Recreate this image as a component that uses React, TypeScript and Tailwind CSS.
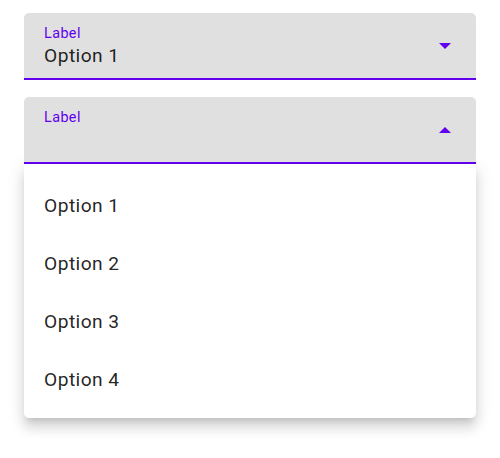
import React from "react";

function Arrow({ up }: { up?: boolean }) {
  return (
    <svg width="12" height="6" viewBox="0 0 12 6" className="shrink-0">
      {up ? <path d="M0 6 L6 0 L12 6 Z" fill="#6200ee" /> : <path d="M0 0 L12 0 L6 6 Z" fill="#6200ee" />}
    </svg>
  );
}

export default function App() {
  const options = ["Option 1", "Option 2", "Option 3", "Option 4"];
  return (
    <div className="w-[500px] h-[458px] bg-white px-6 pt-[13px] font-['Roboto',sans-serif]">
      <div className="h-[67px] bg-[#e0e0e0] rounded-t-[5px] border-b-[2.4px] border-[#6200ee] flex items-center pl-5 pr-[25px]">
        <div className="flex-1 flex flex-col pt-[2px]">
          <span className="text-[14.4px] leading-[16px] tracking-[0.4px] text-[#6200ee]">Label</span>
          <span className="text-[19.2px] leading-[24px] tracking-[0.45px] text-[rgba(0,0,0,0.87)] mt-[2px]">Option 1</span>
        </div>
        <Arrow />
      </div>
      <div className="mt-[17px]">
        <div className="h-[67px] bg-[#e0e0e0] rounded-t-[5px] border-b-[2.4px] border-[#6200ee] flex items-center pl-5 pr-[25px] relative">
          <div className="flex-1 self-start pt-[12.5px]">
            <span className="block text-[14.4px] leading-[16px] tracking-[0.4px] text-[#6200ee]">Label</span>
          </div>
          <Arrow up />
        </div>
        <div className="bg-white rounded-b-[5px] pt-[13px] pb-[9px] shadow-[0_6px_6px_-4px_rgba(0,0,0,0.14),0_10px_12px_1px_rgba(0,0,0,0.1),0_4px_17px_2px_rgba(0,0,0,0.08)]">
          {options.map((o) => (
            <div key={o} className="h-[58px] flex items-center pl-5 text-[19.2px] tracking-[0.45px] text-[rgba(0,0,0,0.87)]">
              {o}
            </div>
          ))}
        </div>
      </div>
    </div>
  );
}
